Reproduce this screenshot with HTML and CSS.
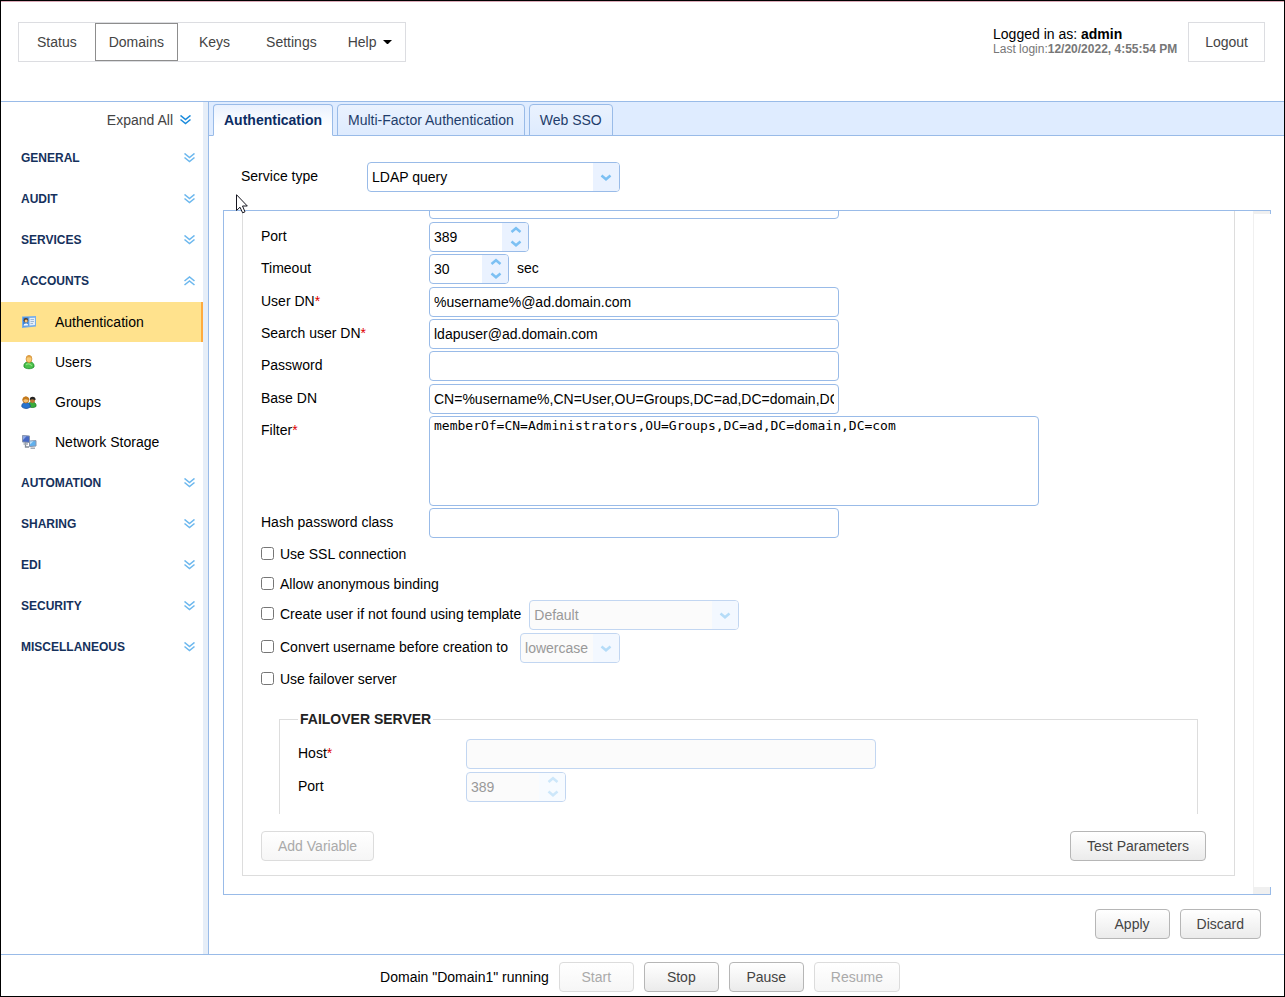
FILE: index.html
```html
<!DOCTYPE html>
<html lang="en">
<head>
<meta charset="utf-8">
<title>Domains - Authentication</title>
<link rel="stylesheet" href="styles.css">
</head>
<body>
<svg class="defs" width="0" height="0" aria-hidden="true">
  <symbol id="dbl-down" viewBox="0 0 11 10"><path d="M0.5 0.5L5.5 4.5L10.5 0.5M0.5 4.5L5.5 8.5L10.5 4.5" fill="none" stroke="currentColor" stroke-width="1.6"/></symbol>
  <symbol id="dbl-up" viewBox="0 0 11 10"><path d="M0.5 5L5.5 1L10.5 5M0.5 9L5.5 5L10.5 9" fill="none" stroke="currentColor" stroke-width="1.6"/></symbol>
  <symbol id="chev-down" viewBox="0 0 12 8"><path d="M1.5 1.5L6 5.3L10.5 1.5" fill="none" stroke="currentColor" stroke-width="2.5"/></symbol>
  <symbol id="chev-up" viewBox="0 0 12 8"><path d="M1.5 6L6 2.2L10.5 6" fill="none" stroke="currentColor" stroke-width="2.5"/></symbol>
</svg>

<header class="header">
  <nav class="topnav" aria-label="Main">
    <a class="topnav-item" href="#status">Status</a>
    <a class="topnav-item current" href="#domains">Domains</a>
    <a class="topnav-item" href="#keys">Keys</a>
    <a class="topnav-item" href="#settings">Settings</a>
    <button class="topnav-item help" type="button">Help <svg width="9" height="5" viewBox="0 0 9 5" aria-hidden="true"><path d="M0 0H9L5 4H4Z" fill="#000"/></svg></button>
  </nav>
  <div class="account">
    <div class="login-info">
      <div class="login-name">Logged in as: <strong>admin</strong></div>
      <div class="login-date">Last login:<strong>12/20/2022, 4:55:54 PM</strong></div>
    </div>
    <button class="logout" type="button">Logout</button>
  </div>
</header>

<div class="body">
  <aside class="sidebar">
    <button class="expand-all" type="button">Expand All <svg width="11" height="10" aria-hidden="true"><use href="#dbl-down"/></svg></button>
    <button class="group" type="button">GENERAL <svg width="11" height="10" aria-hidden="true"><use href="#dbl-down"/></svg></button>
    <button class="group" type="button">AUDIT <svg width="11" height="10" aria-hidden="true"><use href="#dbl-down"/></svg></button>
    <button class="group" type="button">SERVICES <svg width="11" height="10" aria-hidden="true"><use href="#dbl-down"/></svg></button>
    <button class="group" type="button" aria-expanded="true">ACCOUNTS <svg width="11" height="10" aria-hidden="true"><use href="#dbl-up"/></svg></button>
    <nav class="items" aria-label="Accounts">
      <a class="item selected" href="#authentication">
        <svg width="16" height="16" viewBox="0 0 16 16" aria-hidden="true">
          <path d="M1 2.5L15 2V12.5L1 14Z" fill="#77aee8"/>
          <path d="M2 3.5L7.5 3.2V12L2 12.6Z" fill="#3d85d8"/>
          <path d="M8.5 4L14 3.8V11L8.5 11.6Z" fill="#e3edfa"/>
          <path d="M9.5 5.5H13M9.5 7.5H13M9.5 9.5H12" stroke="#9db8d8"/>
          <circle cx="4.9" cy="6.3" r="2.2" fill="#5a3a1c"/><circle cx="5.1" cy="6.9" r="1.5" fill="#f3c888"/>
          <path d="M2.5 11.8C2.5 8.8 7.2 8.8 7.2 11.4Z" fill="#f8fbff"/>
        </svg>Authentication</a>
      <a class="item" href="#users">
        <svg width="16" height="16" viewBox="0 0 16 16" aria-hidden="true">
          <path d="M3 13C2.4 9.5 4.5 8.5 6 8H10C12 8.7 13.4 10 13 13C11 15.3 5 15.3 3 13Z" fill="#4cc14c" stroke="#168a25" stroke-width=".8"/>
          <path d="M5 10.8C6.5 9.2 9 9.5 11 12" fill="none" stroke="#8be27d" stroke-width="1.2"/>
          <ellipse cx="8" cy="5" rx="2.9" ry="3.6" fill="#f8cb75" stroke="#cf8a35" stroke-width=".8"/>
          <path d="M5.3 3.8C5.7 .8 10.4 .8 10.8 3.8C9 3.3 7.5 2.6 5.3 3.8Z" fill="#e0a044"/>
        </svg>Users</a>
      <a class="item" href="#groups">
        <svg width="16" height="16" viewBox="0 0 16 16" aria-hidden="true">
          <path d="M7.5 12C7.5 8.5 9 8 11 8C14 8 15.6 10 15 12.5C13 14 9 14 7.5 12Z" fill="#3aac3c" stroke="#187a26" stroke-width=".7"/>
          <ellipse cx="11.5" cy="6" rx="2.6" ry="3" fill="#b97735"/>
          <path d="M8.8 6C8.2 2 14.8 1.6 14.6 6C13 6 12 4.2 8.8 6Z" fill="#252525"/>
          <path d="M.8 12.8C.4 9.7 2.4 8.8 4 8.4C6.5 8.2 9.7 9.2 9.2 13C7 15 3 15 .8 12.8Z" fill="#2874ce" stroke="#124891" stroke-width=".7"/>
          <circle cx="4.8" cy="6" r="3" fill="#f5c274" stroke="#b76c18" stroke-width=".8"/>
          <path d="M1.6 6.5C1 1.2 8.8 1.1 8 6.2C6.4 6 5.4 4 1.6 6.5Z" fill="#c47a1c"/>
        </svg>Groups</a>
      <a class="item" href="#storage">
        <svg width="16" height="16" viewBox="0 0 16 16" aria-hidden="true">
          <path d="M1.5 1.5L8.5 2V8.5L1.5 8Z" fill="#4668c4" stroke="#8995ac"/>
          <path d="M2 2L5.5 2.3L2 6Z" fill="#8fa9e6"/>
          <path d="M4.5 8.5V13H8" fill="none" stroke="#858d98" stroke-width="1.3"/>
          <path d="M2.5 10H7" stroke="#a2a9b3" stroke-width="1.5"/>
          <path d="M8.5 7L15 6.6V12L8.5 12.6Z" fill="#5fb0ee" stroke="#8995ac"/>
          <path d="M9 7.5L12.5 7.3L9 10.5Z" fill="#b8defa"/>
          <path d="M9.5 14.2H14" stroke="#a2a9b3" stroke-width="1.5"/>
        </svg>Network Storage</a>
    </nav>
    <button class="group" type="button">AUTOMATION <svg width="11" height="10" aria-hidden="true"><use href="#dbl-down"/></svg></button>
    <button class="group" type="button">SHARING <svg width="11" height="10" aria-hidden="true"><use href="#dbl-down"/></svg></button>
    <button class="group" type="button">EDI <svg width="11" height="10" aria-hidden="true"><use href="#dbl-down"/></svg></button>
    <button class="group" type="button">SECURITY <svg width="11" height="10" aria-hidden="true"><use href="#dbl-down"/></svg></button>
    <button class="group" type="button">MISCELLANEOUS <svg width="11" height="10" aria-hidden="true"><use href="#dbl-down"/></svg></button>
  </aside>
  <div class="splitter"></div>

  <main class="main">
    <div class="tabs" role="tablist">
      <button class="tab active" type="button" role="tab" aria-selected="true">Authentication</button>
      <button class="tab" type="button" role="tab">Multi-Factor Authentication</button>
      <button class="tab" type="button" role="tab">Web SSO</button>
    </div>

    <form class="content">
      <div class="service">
        <label for="service-type">Service type</label>
        <span class="select service-select"><select id="service-type"><option>LDAP query</option></select><svg width="12" height="8" aria-hidden="true"><use href="#chev-down"/></svg></span>
      </div>

      <div class="panel">
        <div class="view">
          <div class="ldap">
            <div class="row unlabelled"><input class="text" type="text" aria-label="Server address"></div>
            <div class="rows">
              <div class="row"><label for="port">Port</label><span class="spin port"><input id="port" type="number" value="389"><span class="spin-buttons"><button type="button" aria-label="Increase port"><svg width="12" height="8"><use href="#chev-up"/></svg></button><button type="button" aria-label="Decrease port"><svg width="12" height="8"><use href="#chev-down"/></svg></button></span></span></div>
              <div class="row"><label for="timeout">Timeout</label><span class="spin timeout"><input id="timeout" type="number" value="30"><span class="spin-buttons"><button type="button" aria-label="Increase timeout"><svg width="12" height="8"><use href="#chev-up"/></svg></button><button type="button" aria-label="Decrease timeout"><svg width="12" height="8"><use href="#chev-down"/></svg></button></span></span><span class="unit">sec</span></div>
            </div>
            <div class="rows">
              <div class="row"><label for="user-dn">User DN<span class="req">*</span></label><input class="text" id="user-dn" type="text" value="%username%@ad.domain.com"></div>
              <div class="row"><label for="search-dn">Search user DN<span class="req">*</span></label><input class="text" id="search-dn" type="text" value="ldapuser@ad.domain.com"></div>
              <div class="row"><label for="password">Password</label><input class="text" id="password" type="password"></div>
            </div>
            <div class="rows">
              <div class="row"><label for="base-dn">Base DN</label><input class="text" id="base-dn" type="text" value="CN=%username%,CN=User,OU=Groups,DC=ad,DC=domain,DC=com"></div>
              <div class="row"><label for="filter">Filter<span class="req">*</span></label><textarea class="text area" id="filter" spellcheck="false">memberOf=CN=Administrators,OU=Groups,DC=ad,DC=domain,DC=com</textarea></div>
              <div class="row"><label for="hash-class">Hash password class</label><input class="text" id="hash-class" type="text"></div>
              <div class="checks">
                <div class="check"><input type="checkbox" id="ssl"><label for="ssl">Use SSL connection</label></div>
                <div class="check"><input type="checkbox" id="anon"><label for="anon">Allow anonymous binding</label></div>
                <div class="check"><input type="checkbox" id="create"><label for="create">Create user if not found using template</label><span class="select template-select off"><select disabled aria-label="Template"><option>Default</option></select><svg width="12" height="8" aria-hidden="true"><use href="#chev-down"/></svg></span></div>
              </div>
            </div>
            <div class="rows">
              <div class="check convert"><input type="checkbox" id="convert"><label for="convert">Convert username before creation to</label><span class="select case-select off"><select disabled aria-label="Username case"><option>lowercase</option></select><svg width="12" height="8" aria-hidden="true"><use href="#chev-down"/></svg></span></div>
              <div class="check"><input type="checkbox" id="failover"><label for="failover">Use failover server</label></div>
            </div>
            <fieldset class="failover">
              <legend>FAILOVER SERVER</legend>
              <div class="rows">
                <div class="row"><label for="f-host">Host<span class="req">*</span></label><input class="text" id="f-host" type="text" disabled></div>
                <div class="row"><label for="f-port">Port</label><span class="spin port off"><input id="f-port" type="number" value="389" disabled><span class="spin-buttons"><button type="button" disabled aria-label="Increase failover port"><svg width="12" height="8"><use href="#chev-up"/></svg></button><button type="button" disabled aria-label="Decrease failover port"><svg width="12" height="8"><use href="#chev-down"/></svg></button></span></span></div>
              </div>
            </fieldset>
            <div class="ldap-actions">
              <button class="btn" type="button" disabled>Add Variable</button>
              <button class="btn" type="button">Test Parameters</button>
            </div>
          </div>
        </div>
        <div class="track"></div>
      </div>

      <div class="actions">
        <button class="btn" type="button">Apply</button>
        <button class="btn" type="button">Discard</button>
      </div>
      <svg class="pointer" width="12" height="20" viewBox="0 0 12 20" aria-hidden="true"><path d="M.5 .7V16.5L4 13.2L6.6 18.8L9 17.8L6.5 12H11.3Z" fill="#fff" stroke="#15151f"/></svg>
    </form>
  </main>
</div>

<footer class="footer">
  <span class="state">Domain "Domain1" running</span>
  <button class="btn" type="button" disabled>Start</button>
  <button class="btn" type="button">Stop</button>
  <button class="btn" type="button">Pause</button>
  <button class="btn" type="button" disabled>Resume</button>
</footer>
</body>
</html>
```
FILE: styles.css
```css
* { box-sizing: border-box; }

body {
  margin: 0;
  min-height: 100vh;
  display: flex;
  flex-direction: column;
  border: 1px solid #000;
  background: #fff;
  color: #000;
  font: 14px/16px "Liberation Sans", Arial, sans-serif;
}

button, input, select { font: inherit; color: inherit; }
button { cursor: pointer; }
a { color: inherit; text-decoration: none; }
svg { display: block; flex: none; }
.defs { position: absolute; }

/* header */
.header {
  display: flex;
  justify-content: space-between;
  align-items: flex-start;
  padding: 20px 19px 39px 17px;
  border-top: 1px solid #dcaab8;
  border-bottom: 1px solid #99bbe8;
}
.topnav {
  display: flex;
  height: 40px;
  border: 1px solid #dcdde1;
  color: #444;
}
.topnav-item {
  display: flex;
  align-items: center;
  padding: 0 18px;
}
.topnav-item.current {
  margin-right: 3px;
  padding: 0 13px;
  border: 1px solid #8d8d8d;
}
.topnav-item.help {
  gap: 7px;
  padding: 0 13px;
  border: 0;
  background: none;
}
.account { display: flex; gap: 11px; }
.login-info { padding-top: 4px; }
.login-date {
  color: #777;
  font-size: 12px;
  line-height: 14px;
}
.logout {
  height: 40px;
  padding: 0 16px;
  border: 1px solid #dcdde1;
  background: #fff;
  color: #444;
}

/* columns */
.body { flex: 1; display: flex; }
.sidebar { flex: none; width: 202px; }
.splitter {
  flex: none;
  width: 6px;
  border-right: 1px solid #99bbe8;
  background: #e6eef8;
}
.main { flex: 1; min-width: 0; display: flex; flex-direction: column; }

/* sidebar */
.expand-all, .group {
  display: flex;
  align-items: center;
  width: 100%;
  border: 0;
  background: none;
}
.expand-all {
  justify-content: flex-end;
  gap: 7px;
  height: 35px;
  padding: 0 12px 0 0;
  color: #444;
}
.expand-all svg { color: #1b8bdc; }
.group {
  justify-content: space-between;
  height: 41px;
  padding: 0 8px 0 20px;
  color: #15315c;
  font-size: 12px;
  font-weight: bold;
}
.group svg { color: #6db8ee; }
.items { padding-top: 1px; }
.item {
  display: flex;
  align-items: center;
  gap: 18px;
  height: 40px;
  padding-left: 20px;
}
.item.selected {
  border-right: 2px solid #ffab3f;
  background: #ffe28d;
}

/* tabs */
.tabs {
  display: flex;
  gap: 4px;
  height: 34px;
  padding: 2px 4px 0;
  border-bottom: 1px solid #99bbe8;
  background: #dfecff;
}
.tab {
  height: 32px;
  padding: 0 10px;
  border: 1px solid #99bbe8;
  border-radius: 4px 4px 0 0;
  background: linear-gradient(#eaf2fe, #deebfe);
  color: #1f3d6b;
}
.tab.active {
  border-bottom-color: #fff;
  background: linear-gradient(#e9f1fe, #fff 70%);
  color: #0b2c63;
  font-weight: bold;
}

/* form area */
.content {
  position: relative;
  flex: 1;
  display: flex;
  flex-direction: column;
  padding: 26px 13px 15px 14px;
}
.service {
  display: flex;
  margin-bottom: 18px;
  padding-left: 18px;
  line-height: 28px;
}
.service label { width: 126px; }
.pointer {
  position: absolute;
  top: 58px;
  left: 27px;
}
.panel {
  flex: 1;
  display: flex;
  border: 1px solid #99bbe8;
  border-right: 0;
}
.view {
  flex: 1;
  min-width: 0;
  overflow: hidden;
  padding: 0 18px 18px;
}
.track {
  width: 18px;
  display: flex;
  flex-direction: column;
  justify-content: space-between;
  border-left: 1px solid #f0f0f0;
}
.track::before, .track::after {
  content: "";
  height: 3px;
  border-right: 1px solid #99bbe8;
  background: #f0f0f0;
}
.track::after { height: 7px; }

.ldap {
  display: flex;
  flex-direction: column;
  gap: 3px;
  margin-top: -22px;
  padding: 0 28px 14px 18px;
  border: 1px solid #ddd;
  border-top: 0;
}
.rows {
  display: flex;
  flex-direction: column;
  gap: 2px;
}
.row {
  display: flex;
  align-items: flex-start;
  line-height: 28px;
}
.row label { flex: none; width: 168px; }
.row.unlabelled { padding-left: 168px; }
.req { color: #e00000; }
.unit { margin-left: 8px; }

.text, .spin, .select {
  height: 30px;
  border: 1px solid #99bbe8;
  border-radius: 4px;
  background: #fff;
}
.text {
  flex: 0 1 410px;
  min-width: 0;
  padding: 0 4px;
}
.text:disabled { border-color: #c2d6f1; background: #fbfbfb; }
.area {
  flex-basis: 610px;
  height: 90px;
  padding: 1px 4px;
  resize: none;
  font: 13px/16px "DejaVu Sans Mono", monospace;
}

.spin { display: flex; overflow: hidden; }
.spin.port { width: 100px; }
.spin.timeout { width: 80px; }
.spin input {
  flex: 1;
  min-width: 0;
  padding: 0 4px;
  border: 0;
  background: none;
  appearance: textfield;
}
.spin input::-webkit-inner-spin-button { appearance: none; margin: 0; }
.spin-buttons {
  display: flex;
  flex-direction: column;
  width: 26px;
  background: #eaf2ff;
  color: #7cc0f3;
}
.spin-buttons button {
  flex: 1;
  display: flex;
  align-items: center;
  justify-content: center;
  padding: 0 0 0 2px;
  border: 0;
  background: none;
  color: inherit;
}

.select { position: relative; overflow: hidden; }
.select select {
  display: block;
  width: 100%;
  height: 100%;
  padding: 0 30px 0 4px;
  border: 0;
  appearance: none;
  background: linear-gradient(to left, #eaf2ff 26px, transparent 26px);
  opacity: 1;
}
.select svg {
  position: absolute;
  top: 11px;
  right: 7px;
  color: #7cc0f3;
  pointer-events: none;
}
.service-select { width: 253px; }
.template-select { width: 210px; }
.case-select { width: 100px; }

.off { border-color: #c2d6f1; background: #fbfbfb; }
.off input, .off select { color: #999; }
.off select { background: linear-gradient(to left, #f3f8ff 26px, transparent 26px); }
.off svg { color: #b5dcf8; }
.off .spin-buttons { background: #f7fbff; }
.off .spin-buttons svg { color: #cde7fa; }

.check {
  display: flex;
  align-items: flex-start;
  height: 30px;
  line-height: 28px;
}
.check input { width: 13px; height: 13px; margin: 7px 6px 0 0; }
.check .select { margin-left: 8px; }
.convert .select { margin-left: 12px; }

.failover {
  min-width: 0;
  margin: 13px 8px 0 18px;
  padding: 12px 18px;
  border: 1px solid #ddd;
  border-bottom: 0;
}
.failover .rows { gap: 3px; }
.failover legend {
  padding: 0 2px;
  color: #222;
  font-weight: bold;
}
.ldap-actions {
  display: flex;
  justify-content: space-between;
  margin-top: 14px;
}

.btn {
  min-width: 75px;
  height: 30px;
  padding: 0 16px;
  border: 1px solid #b6b6b6;
  border-radius: 4px;
  background: linear-gradient(#fff, #ebebeb);
  color: #444;
}
.btn:disabled {
  border-color: #dcdcdc;
  background: linear-gradient(#fff, #f6f6f6);
  color: #aaa;
}
.actions {
  display: flex;
  justify-content: flex-end;
  gap: 10px;
  margin-top: 14px;
  padding-right: 10px;
}

.footer {
  display: flex;
  align-items: center;
  justify-content: center;
  gap: 10px;
  padding: 7px 5px 4px 0;
  border-top: 1px solid #99bbe8;
}
```
